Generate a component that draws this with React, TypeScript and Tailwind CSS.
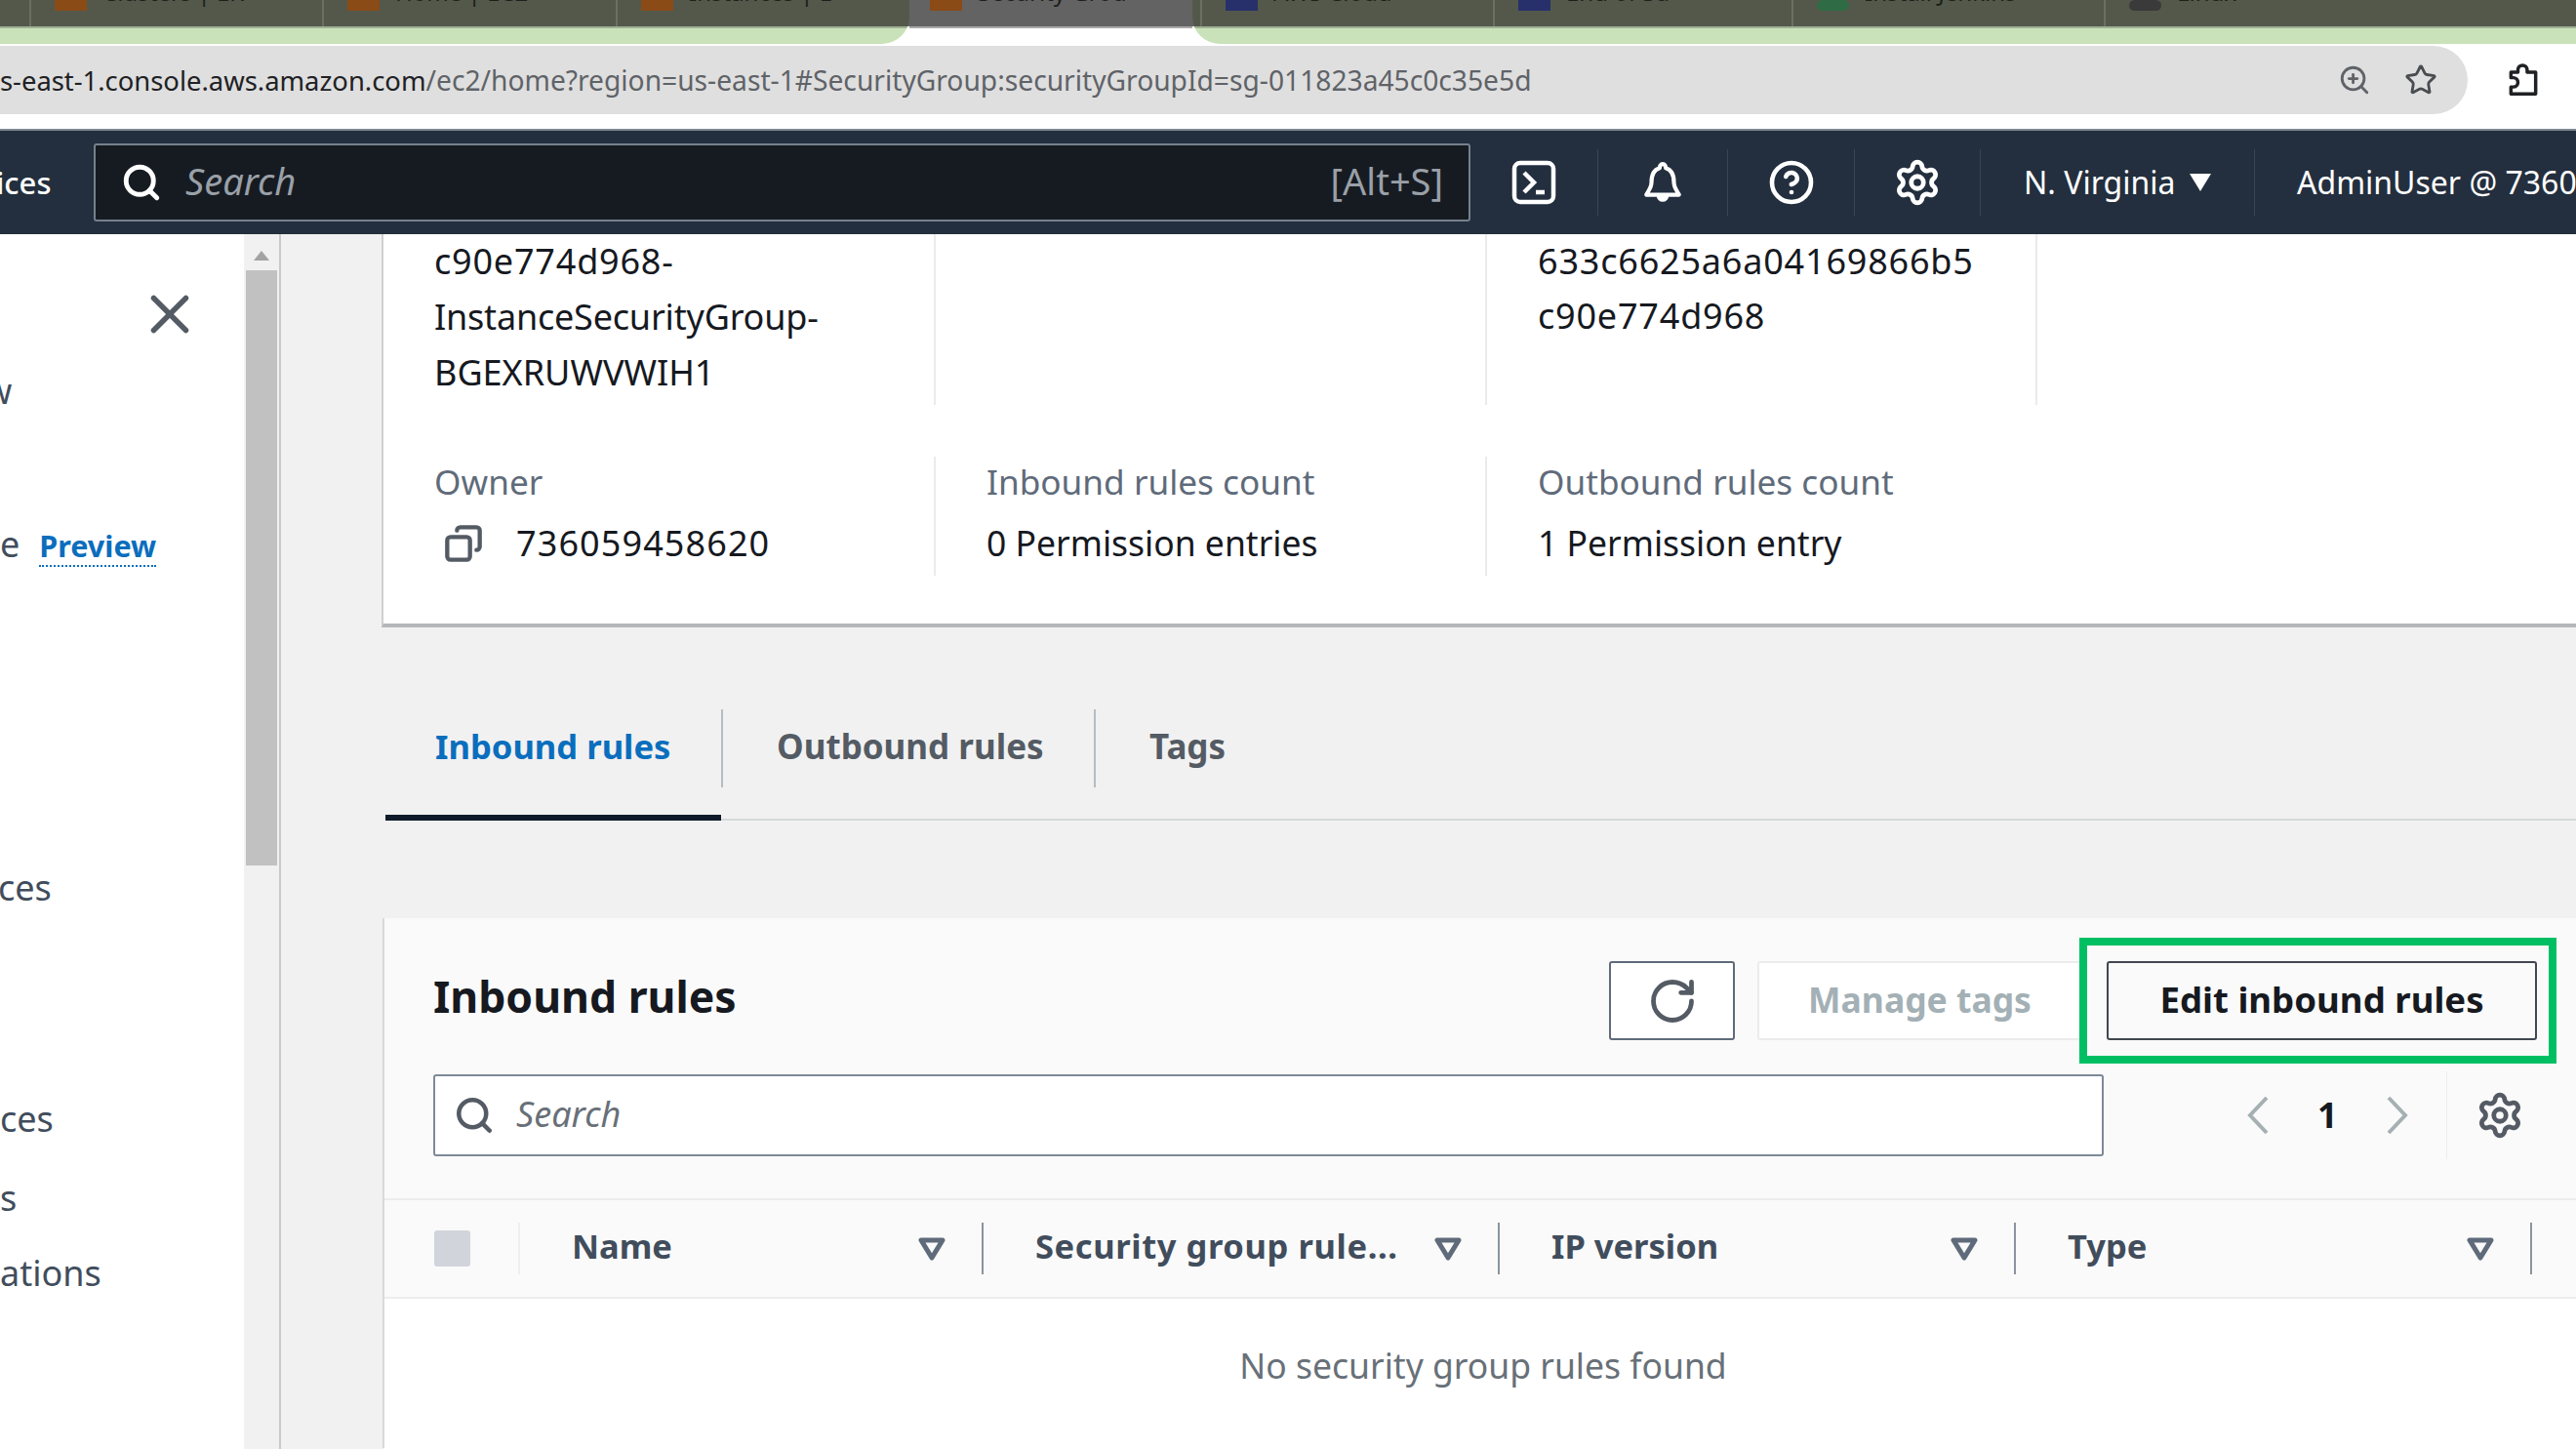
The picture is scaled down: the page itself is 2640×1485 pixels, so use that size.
import React from "react";
import { CircleHelp, Copy, RotateCw, Search, Settings, Star, X, ZoomIn } from "lucide-react";

const browserTabs = [
  { w: "w-[300px]", icon: "bg-[#8a4b17]", label: "Clusters | EK" },
  { w: "w-[301px]", icon: "bg-[#8a4b17]", label: "Home | EC2" },
  { w: "w-[331px]", icon: "bg-[#8a4b17]", label: "Instances | E" },
];
const rightTabs = [
  { w: "w-[300px]", icon: "bg-[#27306b]", label: "AWS Cloud" },
  { w: "w-[306px]", icon: "bg-[#27306b]", label: "End of Su" },
  { w: "w-[320px]", icon: "bg-[#2f6b45] rounded-full", label: "Install Jenkins" },
  { w: "w-[340px]", icon: "bg-[#3a3a3a] rounded-full", label: "Linux" },
];

function TabCell({ w, icon, label }: { w: string; icon: string; label: string }) {
  return (
    <div className={`${w} h-[27px] shrink-0 flex items-start gap-[16px] pl-[24px] overflow-hidden border-l-2 border-l-[#6b6f64]`}>
      <div className={`w-[33px] h-[11px] shrink-0 ${icon}`} />
      <span className="text-[24px] leading-[24px] -mt-[20px] text-[#1d1f1a] whitespace-nowrap">{label}</span>
    </div>
  );
}

function NavDivider() {
  return <div className="w-px h-[68px] bg-[#3a4656] shrink-0" />;
}

function FilterArrow() {
  return (
    <svg width="28" height="26" viewBox="0 0 28 26" className="shrink-0">
      <path d="M3 4h22L14 22z" fill="none" stroke="#5f6b7a" strokeWidth="5" strokeLinejoin="round" />
    </svg>
  );
}

function HeaderCell({ label, w, spaced }: { label: string; w: string; spaced?: boolean }) {
  return (
    <div className={`${w} h-[53px] flex items-center justify-between pl-[53px] pr-[37px] border-r-2 border-r-[#8a94a0] shrink-0`}>
      <span className={`text-[34.5px] font-bold text-[#414d5c] whitespace-nowrap pb-[6px] ${spaced ? "tracking-[0.6px]" : ""}`}>{label}</span>
      <FilterArrow />
    </div>
  );
}

function Meta({ label, value, w }: { label: string; value: string; w: string }) {
  return (
    <div className={`${w} pl-[52px] h-[122px] border-l-2 border-l-[#e9ebed] shrink-0`}>
      <div className="text-[35.2px] leading-[57px] text-[#5f6b7a] -mt-[3px]">{label}</div>
      <div className="text-[35.5px] leading-[57px] text-[#16191f] mt-[6px]">{value}</div>
    </div>
  );
}

function Chevron({ left }: { left?: boolean }) {
  return (
    <svg width="26" height="42" viewBox="0 0 26 42" className="shrink-0">
      <path d={left ? "M22 3L5 21l17 18" : "M4 3l17 18L4 39"} fill="none" stroke="#a5b0b3" strokeWidth="4" />
    </svg>
  );
}

export default function App() {
  return (
    <div className="w-[2640px] h-[1485px] overflow-hidden bg-white flex flex-col font-['Noto_Sans',sans-serif]">
      {/* browser tab strip */}
      <div className="h-[45px] flex shrink-0 bg-[linear-gradient(#636363_27px,#ffffff_27px)]">
        <div className="w-[932px] h-[45px] shrink-0 rounded-br-[28px] overflow-hidden flex flex-col">
          <div className="h-[27px] bg-[#53584a] flex pl-[30px]">
            {browserTabs.map((t) => <TabCell key={t.label} {...t} />)}
          </div>
          <div className="h-[18px] bg-[#c9e2b9] border-t-2 border-t-[#9fb094]" />
        </div>
        <div className="w-[290px] shrink-0 flex flex-col">
          <div className="h-[27px] bg-[#636363] flex items-start gap-[16px] pl-[21px] overflow-hidden">
            <div className="w-[33px] h-[11px] bg-[#8a4b17] shrink-0" />
            <span className="text-[24px] leading-[24px] -mt-[20px] text-[#1d1f1a] whitespace-nowrap">Security Grou</span>
          </div>
          <div className="h-[18px] bg-white border-t-2 border-t-[#a8a8a8]" />
        </div>
        <div className="flex-1 h-[45px] rounded-bl-[28px] overflow-hidden flex flex-col">
          <div className="h-[27px] bg-[#53584a] flex pl-[8px]">
            {rightTabs.map((t) => <TabCell key={t.label} {...t} />)}
          </div>
          <div className="h-[18px] bg-[#c9e2b9] border-t-2 border-t-[#9fb094]" />
        </div>
      </div>

      {/* address row */}
      <div className="h-[87px] shrink-0 flex items-start pt-[2px]">
        <div className="w-[2529px] h-[70px] bg-[#dfdfdf] rounded-r-full flex items-center overflow-hidden">
          <div className="flex-1 min-w-0 whitespace-nowrap text-[28.2px] text-[#5f6368]">
            <span className="text-[#202124] text-[27.4px]">s-east-1.console.aws.amazon.com</span>/ec2/home?region=us-east-1#SecurityGroup:securityGroupId=sg-011823a45c0c35e5d
          </div>
          <ZoomIn className="w-[34px] h-[34px] text-[#5f6368] mr-[34px] shrink-0" strokeWidth={2} />
          <Star className="w-[34px] h-[34px] text-[#4a4d50] mr-[31px] shrink-0" strokeWidth={2} />
        </div>
        <svg width="38" height="38" viewBox="0 0 24 24" className="ml-[38px] mt-[16px] shrink-0">
          <path d="M4 7h4.5V5.5a3 3 0 0 1 6 0V7H20v14H4v-4.5h1.5a3 3 0 0 0 0-6H4z" fill="none" stroke="#202124" strokeWidth="2.2" strokeLinejoin="round" />
        </svg>
      </div>

      {/* console nav */}
      <div className="h-[108px] shrink-0 bg-[#232f3e] border-t-2 border-t-[#7f8894] flex items-center">
        <div className="w-[96px] shrink-0 overflow-hidden">
          <span className="block -ml-[4px] text-[31px] text-white font-medium whitespace-nowrap">ices</span>
        </div>
        <div className="w-[1411px] h-[80px] shrink-0 bg-[#161b22] border-2 border-[#76808c] rounded-[3px] flex items-center pl-[26px] pr-[26px]">
          <Search className="w-[42px] h-[42px] text-white shrink-0" strokeWidth={2.8} />
          <span className="ml-[24px] flex-1 text-[38px] italic text-[#9aa0a8] pb-[3px]">Search</span>
          <span className="text-[38px] text-[#9aa0a8] pb-[3px]">[Alt+S]</span>
        </div>
        <div className="w-[130px] flex justify-center shrink-0">
          <svg width="46" height="46" viewBox="0 0 46 46">
            <rect x="3" y="3" width="40" height="40" rx="6" fill="none" stroke="#fff" strokeWidth="4.5" />
            <path d="M13 13l10 10-10 10" fill="none" stroke="#fff" strokeWidth="4.5" />
            <path d="M25 33h9" fill="none" stroke="#fff" strokeWidth="4.5" />
          </svg>
        </div>
        <NavDivider />
        <div className="w-[132px] flex justify-center shrink-0">
          <svg width="46" height="46" viewBox="0 0 44 44">
            <path d="M22 4c-2 0-3 2-3 4-7 2-8 10-8 14 0 5-3 8-5 12h32c-2-4-5-7-5-12 0-4-1-12-8-14 0-2-1-4-3-4z" fill="none" stroke="#fff" strokeWidth="4" strokeLinejoin="round" />
            <path d="M16 35a6 6 0 0 0 12 0z" fill="#fff" />
          </svg>
        </div>
        <NavDivider />
        <div className="w-[129px] flex justify-center shrink-0"><CircleHelp className="w-[48px] h-[48px] text-white" strokeWidth={2.3} /></div>
        <NavDivider />
        <div className="w-[128px] flex justify-center shrink-0"><Settings className="w-[50px] h-[50px] text-white" strokeWidth={2.3} /></div>
        <NavDivider />
        <div className="w-[280px] pl-[44px] flex items-center gap-[14px] shrink-0">
          <span className="text-[32px] text-white whitespace-nowrap">N. Virginia</span>
          <svg width="22" height="18" viewBox="0 0 22 18"><path d="M0 0h22L11 18z" fill="#fff" /></svg>
        </div>
        <NavDivider />
        <span className="pl-[43px] text-[32px] text-white whitespace-nowrap">AdminUser @ 7360-</span>
      </div>

      {/* page */}
      <div className="flex-1 min-h-0 flex">
        <aside className="w-[288px] shrink-0 flex border-r-2 border-r-[#c9c9c9] bg-[#f1f1f1]">
          <div className="w-[250px] bg-white shrink-0 overflow-hidden">
            <div className="flex justify-end pr-[43px] pt-[49px]"><X className="w-[66px] h-[66px] text-[#545b64]" strokeWidth={2} /></div>
            <div className="text-[36px] text-[#414d5c] leading-[57px] -ml-[16px] mt-[17px] h-[57px]">w</div>
            <div className="mt-[102px] flex items-baseline whitespace-nowrap h-[57px]">
              <span className="text-[36px] text-[#414d5c]">e</span>
              <span className="ml-[20px] text-[30.5px] font-bold text-[#0a6ebd] border-b-2 border-dotted border-b-[#0a6ebd] leading-[40px]">Preview</span>
            </div>
            <div className="mt-[293px] text-[36px] leading-[57px] text-[#414d5c] -ml-[2px]">ces</div>
            <div className="mt-[180px] text-[36px] leading-[57px] text-[#414d5c]">ces</div>
            <div className="mt-[24px] text-[36px] leading-[57px] text-[#414d5c]">s</div>
            <div className="mt-[20px] text-[36px] leading-[57px] text-[#414d5c] whitespace-nowrap">ations</div>
          </div>
          <div className="w-[36px] shrink-0 bg-[#f1f1f1] flex flex-col items-center">
            <svg width="16" height="10" viewBox="0 0 16 10" className="mt-[17px]"><path d="M8 0l8 10H0z" fill="#a3a3a3" /></svg>
            <div className="w-[32px] h-[610px] bg-[#c1c1c1] mt-[10px]" />
          </div>
        </aside>

        <main className="flex-1 min-w-0 bg-[#f1f1f1] pl-[104px] overflow-hidden">
          {/* details card */}
          <section className="h-[403px] bg-white border-l-2 border-l-[#cfcfcf] border-b-4 border-b-[#b5b8b8] w-[2260px] -ml-[1px]">
            <div className="flex">
              <div className="w-[564px] h-[175px] pl-[52px] text-[36px] leading-[57px] text-[#16191f] overflow-hidden shrink-0 -mt-[1px]">
                <span className="tracking-[0.8px]">c90e774d968-</span><br />
                <span className="tracking-[-0.2px]">InstanceSecurityGroup-</span><br />
                BGEXRUWVWIH1
              </div>
              <div className="w-[565px] h-[175px] border-l-2 border-l-[#e9ebed] shrink-0" />
              <div className="w-[564px] h-[175px] pl-[52px] border-l-2 border-l-[#e9ebed] text-[36px] leading-[56px] text-[#16191f] tracking-[0.8px] shrink-0">
                633c6625a6a04169866b5<br />c90e774d968
              </div>
              <div className="h-[175px] border-l-2 border-l-[#e9ebed]" />
            </div>
            <div className="flex mt-[53px]">
              <div className="w-[564px] h-[122px] pl-[52px] shrink-0">
                <div className="text-[35.2px] leading-[57px] text-[#5f6b7a] -mt-[3px]">Owner</div>
                <div className="flex items-center mt-[6px]">
                  <Copy className="w-[40px] h-[40px] text-[#545b64] ml-[10px] -scale-x-100" strokeWidth={2.6} />
                  <span className="text-[36px] leading-[57px] text-[#16191f] ml-[34px] tracking-[1.1px]">736059458620</span>
                </div>
              </div>
              <Meta w="w-[565px]" label="Inbound rules count" value="0 Permission entries" />
              <Meta w="w-[564px]" label="Outbound rules count" value="1 Permission entry" />
            </div>
          </section>

          {/* tabs */}
          <div className="mt-[84px] h-[114px] w-[2260px] ml-[3px] border-b-2 border-b-[#d5d9da] flex">
            <div className="w-[344px] h-[114px] border-b-[6px] border-b-[#0f1b2a] pl-[51px] shrink-0">
              <div className="h-[76px] flex items-center text-[34.6px] font-bold text-[#0a6ebd] whitespace-nowrap">Inbound rules</div>
            </div>
            <div className="h-[80px] border-l-2 border-l-[#b7bcc2] w-[382px] pl-[55px] pb-[4px] flex items-center text-[35px] font-bold text-[#545b64] whitespace-nowrap shrink-0">Outbound rules</div>
            <div className="h-[80px] border-l-2 border-l-[#b7bcc2] pl-[55px] pb-[4px] flex items-center text-[35px] font-bold text-[#545b64]">Tags</div>
          </div>

          {/* inbound rules panel */}
          <section className="mt-[100px] w-[2248px] bg-[#fafafa] border-l-2 border-l-[#d9d9d9] h-[543px] pt-[44px]">
            <div className="flex items-center h-[81px] pl-[50px] pr-[40px]">
              <h2 className="flex-1 text-[44.5px] font-bold text-[#16191f] pb-[8px]">Inbound rules</h2>
              <button className="w-[129px] h-[81px] bg-white border-2 border-[#5f6b7a] rounded-[3px] flex items-center justify-center shrink-0">
                <RotateCw className="w-[52px] h-[52px] text-[#545b64]" strokeWidth={2.2} />
              </button>
              <button className="ml-[23px] w-[334px] h-[81px] bg-white border-2 border-[#ececec] rounded-[3px] text-[35.5px] font-bold text-[#a3b0b5] shrink-0 pr-[1px] pb-[2px]">Manage tags</button>
              <div className="ml-[24px] relative shrink-0">
                <button className="w-[441px] h-[81px] bg-[#fafafa] border-2 border-[#414750] rounded-[3px] text-[36.6px] font-bold text-[#16191f] pb-[2px]">Edit inbound rules</button>
                <div className="absolute -left-[28px] -right-[20px] -top-[24px] -bottom-[24px] border-[8px] border-[#00bf63] pointer-events-none" />
              </div>
            </div>

            <div className="flex items-center mt-[32px] pl-[50px]">
              <div className="w-[1712px] h-[84px] bg-white border-2 border-[#7d8998] rounded-[3px] flex items-center pl-[19px] shrink-0">
                <Search className="w-[42px] h-[42px] text-[#545b64] shrink-0" strokeWidth={2.6} />
                <span className="ml-[22px] text-[36px] italic text-[#687078] pb-[2px]">Search</span>
              </div>
              <div className="ml-[145px] shrink-0"><Chevron left /></div>
              <span className="ml-[48px] w-[20px] text-center text-[36px] font-bold text-[#16191f] shrink-0">1</span>
              <div className="ml-[49px] shrink-0"><Chevron /></div>
              <div className="ml-[37px] w-px h-[90px] bg-[#ececec] shrink-0" />
              <Settings className="ml-[29px] w-[50px] h-[50px] text-[#545b64] shrink-0" strokeWidth={2.3} />
            </div>

            <div className="mt-[40px] h-[103px] border-y-2 border-y-[#ececec] flex items-center">
              <div className="w-[139px] h-[53px] flex items-center pl-[51px] border-r-2 border-r-[#eeeeee] shrink-0">
                <div className="w-[37px] h-[37px] rounded-[3px] bg-[#d1d5db]" />
              </div>
              <HeaderCell w="w-[475px]" label="Name" />
              <HeaderCell w="w-[529px]" label="Security group rule..." spaced />
              <HeaderCell w="w-[529px]" label="IP version" />
              <HeaderCell w="w-[529px]" label="Type" />
            </div>

            <div className="bg-white h-[160px] border-b-2 border-b-[#e9e9e9]">
              <div className="w-[2252px] text-center pt-[44px] text-[35.5px] leading-[48px] text-[#687078]">No security group rules found</div>
            </div>
          </section>
        </main>
      </div>
    </div>
  );
}
